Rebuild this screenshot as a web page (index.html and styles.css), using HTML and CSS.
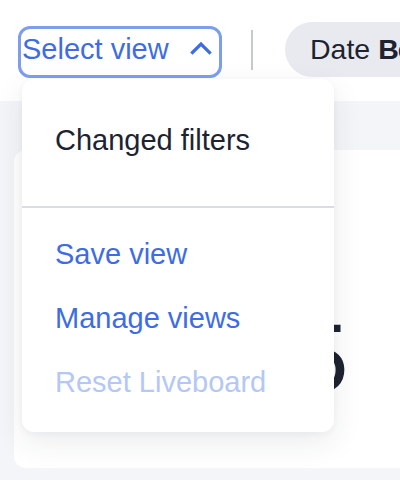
FILE: index.html
```html
<!DOCTYPE html>
<html lang="en">
<head>
<meta charset="utf-8">
<title>Select view</title>
<link rel="stylesheet" href="styles.css">
</head>
<body>
<header class="topbar">
  <button class="view-select" type="button">
    <span class="view-label">Select view</span>
    <svg class="chevron" width="22" height="14" viewBox="0 0 22 14" aria-hidden="true">
      <path d="M2.5 11.5 L11 3 L19.5 11.5" fill="none" stroke="#3d6ce4" stroke-width="3.2" stroke-linecap="square" stroke-linejoin="miter"/>
    </svg>
  </button>
  <span class="divider"></span>
  <div class="chip">Date <b>Be</b></div>
</header>
<main class="content">
  <section class="card">
    <div class="kpi">5</div>
  </section>
</main>
<div class="menu" role="menu">
  <div class="menu-head">Changed filters</div>
  <div class="menu-sep"></div>
  <ul class="menu-list">
    <li class="menu-item">Save view</li>
    <li class="menu-item">Manage views</li>
    <li class="menu-item is-disabled">Reset Liveboard</li>
  </ul>
</div>
</body>
</html>
```
FILE: styles.css
```css
* { box-sizing: border-box; }
html, body {
  margin: 0;
  padding: 0;
}
body {
  width: 400px;
  height: 480px;
  overflow: hidden;
  background: #f4f5f8;
  font-family: "Liberation Sans", Arial, sans-serif;
  color: #1d2330;
  position: relative;
}
.topbar {
  height: 101px;
  background: #ffffff;
  display: flex;
  align-items: flex-start;
  padding: 22px 0 0 18px;
  white-space: nowrap;
  overflow: hidden;
}
.view-select {
  flex: 0 0 auto;
  margin-top: 4px;
  width: 204px;
  height: 52px;
  border: 3px solid #7d9eee;
  border-radius: 12px;
  background: #ffffff;
  padding: 0 7px 0 1px;
  display: flex;
  align-items: center;
  justify-content: space-between;
  font-family: inherit;
  cursor: pointer;
}
.view-label {
  font-size: 29px;
  color: #3d6ce4;
  line-height: 32px;
  position: relative;
  top: -3px;
}
.chevron {
  flex: 0 0 auto;
  position: relative;
  top: -4px;
}
.divider {
  flex: 0 0 auto;
  width: 2px;
  height: 40px;
  background: #c6c9d1;
  margin: 8px 32px 0 29px;
}
.chip {
  flex: 0 0 auto;
  height: 55px;
  background: #e9eaef;
  border-radius: 28px 0 0 28px;
  padding: 0 30px 0 25px;
  font-size: 28.5px;
  line-height: 55px;
  color: #1d2330;
}
.chip b {
  font-weight: 700;
  letter-spacing: -1px;
}
.content {
  padding: 49px 0 0 14px;
}
.card {
  width: 420px;
  height: 318px;
  background: #ffffff;
  border-radius: 12px;
  padding: 160px 0 0 281px;
}
.kpi {
  font-size: 96px;
  line-height: 96px;
  color: #1d2330;
}
.menu {
  position: absolute;
  top: 79px;
  left: 22px;
  width: 312px;
  height: 353px;
  background: #ffffff;
  border-radius: 12px;
  box-shadow: 0 10px 30px rgba(30, 40, 70, 0.09), 0 2px 6px rgba(30, 40, 70, 0.04);
  font-size: 29px;
}
.menu-head {
  padding: 29px 0 0 33px;
  height: 127px;
  line-height: 64px;
  color: #1d2330;
}
.menu-sep {
  height: 2px;
  background: #dcdde4;
}
.menu-list {
  list-style: none;
  margin: 0;
  padding: 14px 0 0 0;
}
.menu-item {
  height: 64px;
  line-height: 64px;
  padding-left: 33px;
  color: #3d6ce4;
}
.menu-item.is-disabled {
  color: #b4c7f6;
}
```
